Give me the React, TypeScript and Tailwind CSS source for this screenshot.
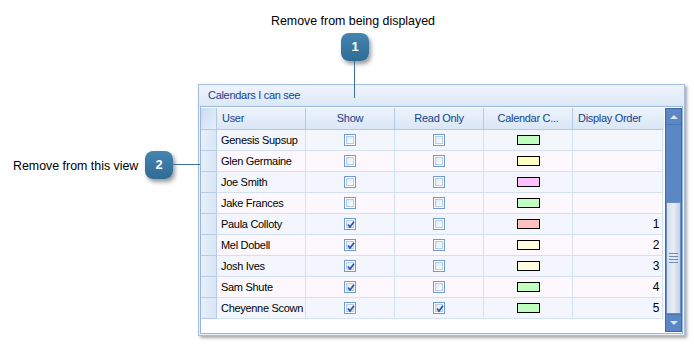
import React from "react";

type Row = {
  user: string;
  show: boolean;
  readOnly: boolean;
  color: string;
  order?: number;
};

const rows: Row[] = [
  { user: "Genesis Supsup", show: false, readOnly: false, color: "#c0ffc0" },
  { user: "Glen Germaine", show: false, readOnly: false, color: "#ffffc0" },
  { user: "Joe Smith", show: false, readOnly: false, color: "#ffc0ff" },
  { user: "Jake Frances", show: false, readOnly: false, color: "#c0ffc0" },
  { user: "Paula Colloty", show: true, readOnly: false, color: "#ffc0c0", order: 1 },
  { user: "Mel Dobell", show: true, readOnly: false, color: "#ffffe0", order: 2 },
  { user: "Josh Ives", show: true, readOnly: false, color: "#ffffe0", order: 3 },
  { user: "Sam Shute", show: true, readOnly: false, color: "#c0ffc0", order: 4 },
  { user: "Cheyenne Scown", show: true, readOnly: true, color: "#c0ffc0", order: 5 },
];

const CheckBox = ({ checked }: { checked: boolean }) => (
  <div className="w-[12px] h-[12px] border border-[#7199d4] bg-white p-[1px]">
    <div className="relative w-full h-full border border-[#b7cbea] bg-gradient-to-br from-[#dfe8f6] to-[#fbfdff]">
      {checked && (
        <svg viewBox="0 0 8 8" className="absolute left-0 top-0 w-[8px] h-[8px]">
          <path d="M1 3.5 L3 6 L7 0.8" fill="none" stroke="#2b5aa8" strokeWidth="1.8" />
        </svg>
      )}
    </div>
  </div>
);

const Badge = ({ n }: { n: string }) => (
  <div className="w-[28px] h-[28px] rounded-[8px] bg-gradient-to-b from-[#4485b0] to-[#2f6c96] text-white font-bold text-[13px] flex items-center justify-center shadow-[2px_3px_4px_rgba(0,0,0,0.4)]">
    {n}
  </div>
);

const cell = "border-r border-b border-[#d3e1f3] flex items-center";

export default function App() {
  return (
    <div className="relative w-[694px] h-[345px] bg-white overflow-hidden font-['Liberation_Sans',Arial,sans-serif]">
      {/* callout 1 */}
      <div className="absolute left-[271px] top-[12px] text-[12.4px] text-black whitespace-nowrap">
        Remove from being displayed
      </div>
      <div className="absolute left-[341px] top-[33px]">
        <Badge n="1" />
      </div>
      <div className="absolute left-[354px] top-[61px] w-px h-[37px] bg-[#3e6f98] z-10" />

      {/* callout 2 */}
      <div className="absolute left-[13px] top-[157px] text-[12.4px] text-black whitespace-nowrap">
        Remove from this view
      </div>
      <div className="absolute left-[145px] top-[151px]">
        <Badge n="2" />
      </div>
      <div className="absolute left-[173px] top-[164px] w-[27px] h-px bg-[#3e6f98] z-10" />

      {/* panel */}
      <div className="ml-[198px] mt-[84px] w-[487px] h-[252px] border border-[#a4bfe2] bg-[#eaf1fb] shadow-[2px_2px_3px_rgba(0,0,0,0.35)] flex flex-col text-[11px] tracking-[-0.3px]">
        <div className="h-[21px] bg-gradient-to-b from-[#eef4fc] to-[#dce8f7] flex items-center pl-[9px] text-[#15428b]">
          Calendars I can see
        </div>
        <div className="mx-[1px] mb-[1px] flex-1 border border-[#9ab6dc] bg-white pt-[1px] flex">
          <div className="w-[463px] flex flex-col">
            {/* header */}
            <div className="flex h-[22px] bg-gradient-to-b from-[#edf3fc] to-[#d9e6f6] text-[#15428b] whitespace-nowrap">
              <div className="w-[16px] border-r border-b border-[#b2c8e6] bg-gradient-to-br from-[#c9dbf1] to-[#e9f0fa]" />
              <div className="w-[89px] border-r border-b border-[#b2c8e6] flex items-center pl-[5px]">User</div>
              <div className="w-[89px] border-r border-b border-[#b2c8e6] flex items-center justify-center">Show</div>
              <div className="w-[89px] border-r border-b border-[#b2c8e6] flex items-center justify-center">Read Only</div>
              <div className="w-[89px] border-r border-b border-[#b2c8e6] flex items-center justify-center">Calendar C...</div>
              <div className="w-[90px] border-b border-[#b2c8e6] flex items-center pl-[5px]">Display Order</div>
            </div>
            {rows.map((r, i) => (
              <div
                key={r.user}
                className={`flex h-[21px] text-black whitespace-nowrap ${i % 2 === 0 ? "bg-[#f3f7fd]" : "bg-[#fcf8fd]"}`}
              >
                <div className="w-[16px] border-r border-b border-[#b9cde8] bg-gradient-to-r from-[#e8f0fa] to-[#d8e5f5]" />
                <div className={`w-[89px] pl-[4px] ${cell}`}>{r.user}</div>
                <div className={`w-[89px] justify-center ${cell}`}>
                  <CheckBox checked={r.show} />
                </div>
                <div className={`w-[89px] justify-center ${cell}`}>
                  <CheckBox checked={r.readOnly} />
                </div>
                <div className={`w-[89px] justify-center ${cell}`}>
                  <div className="w-[23px] h-[10px] border border-black" style={{ backgroundColor: r.color }} />
                </div>
                <div className={`w-[90px] justify-end pr-[3px] text-[12px] ${cell}`}>{r.order}</div>
              </div>
            ))}
          </div>
          {/* scrollbar */}
          <div className="ml-[1px] w-[17px] h-[224px] border border-[#3d67a6] bg-[#5b87c5] flex flex-col">
            <div className="h-[16px] border-b border-[#4a74b3] flex items-center justify-center">
              <div className="w-0 h-0 border-l-[4px] border-r-[4px] border-b-[4px] border-l-transparent border-r-transparent border-b-[#dbe6f5]" />
            </div>
            <div className="h-[77px]" />
            <div className="h-[112px] border border-[#6d8fbf] bg-gradient-to-r from-[#d4dfec] via-[#e7eef6] to-[#c3d1e2] flex flex-col items-center justify-center gap-[2px]">
              <div className="w-[9px] h-px bg-[#6f8db8]" />
              <div className="w-[9px] h-px bg-[#6f8db8]" />
              <div className="w-[9px] h-px bg-[#6f8db8]" />
              <div className="w-[9px] h-px bg-[#6f8db8]" />
            </div>
            <div className="flex-1 border-t border-[#4a74b3] flex items-center justify-center">
              <div className="w-0 h-0 border-l-[4px] border-r-[4px] border-t-[4px] border-l-transparent border-r-transparent border-t-[#dbe6f5]" />
            </div>
          </div>
        </div>
      </div>
    </div>
  );
}
